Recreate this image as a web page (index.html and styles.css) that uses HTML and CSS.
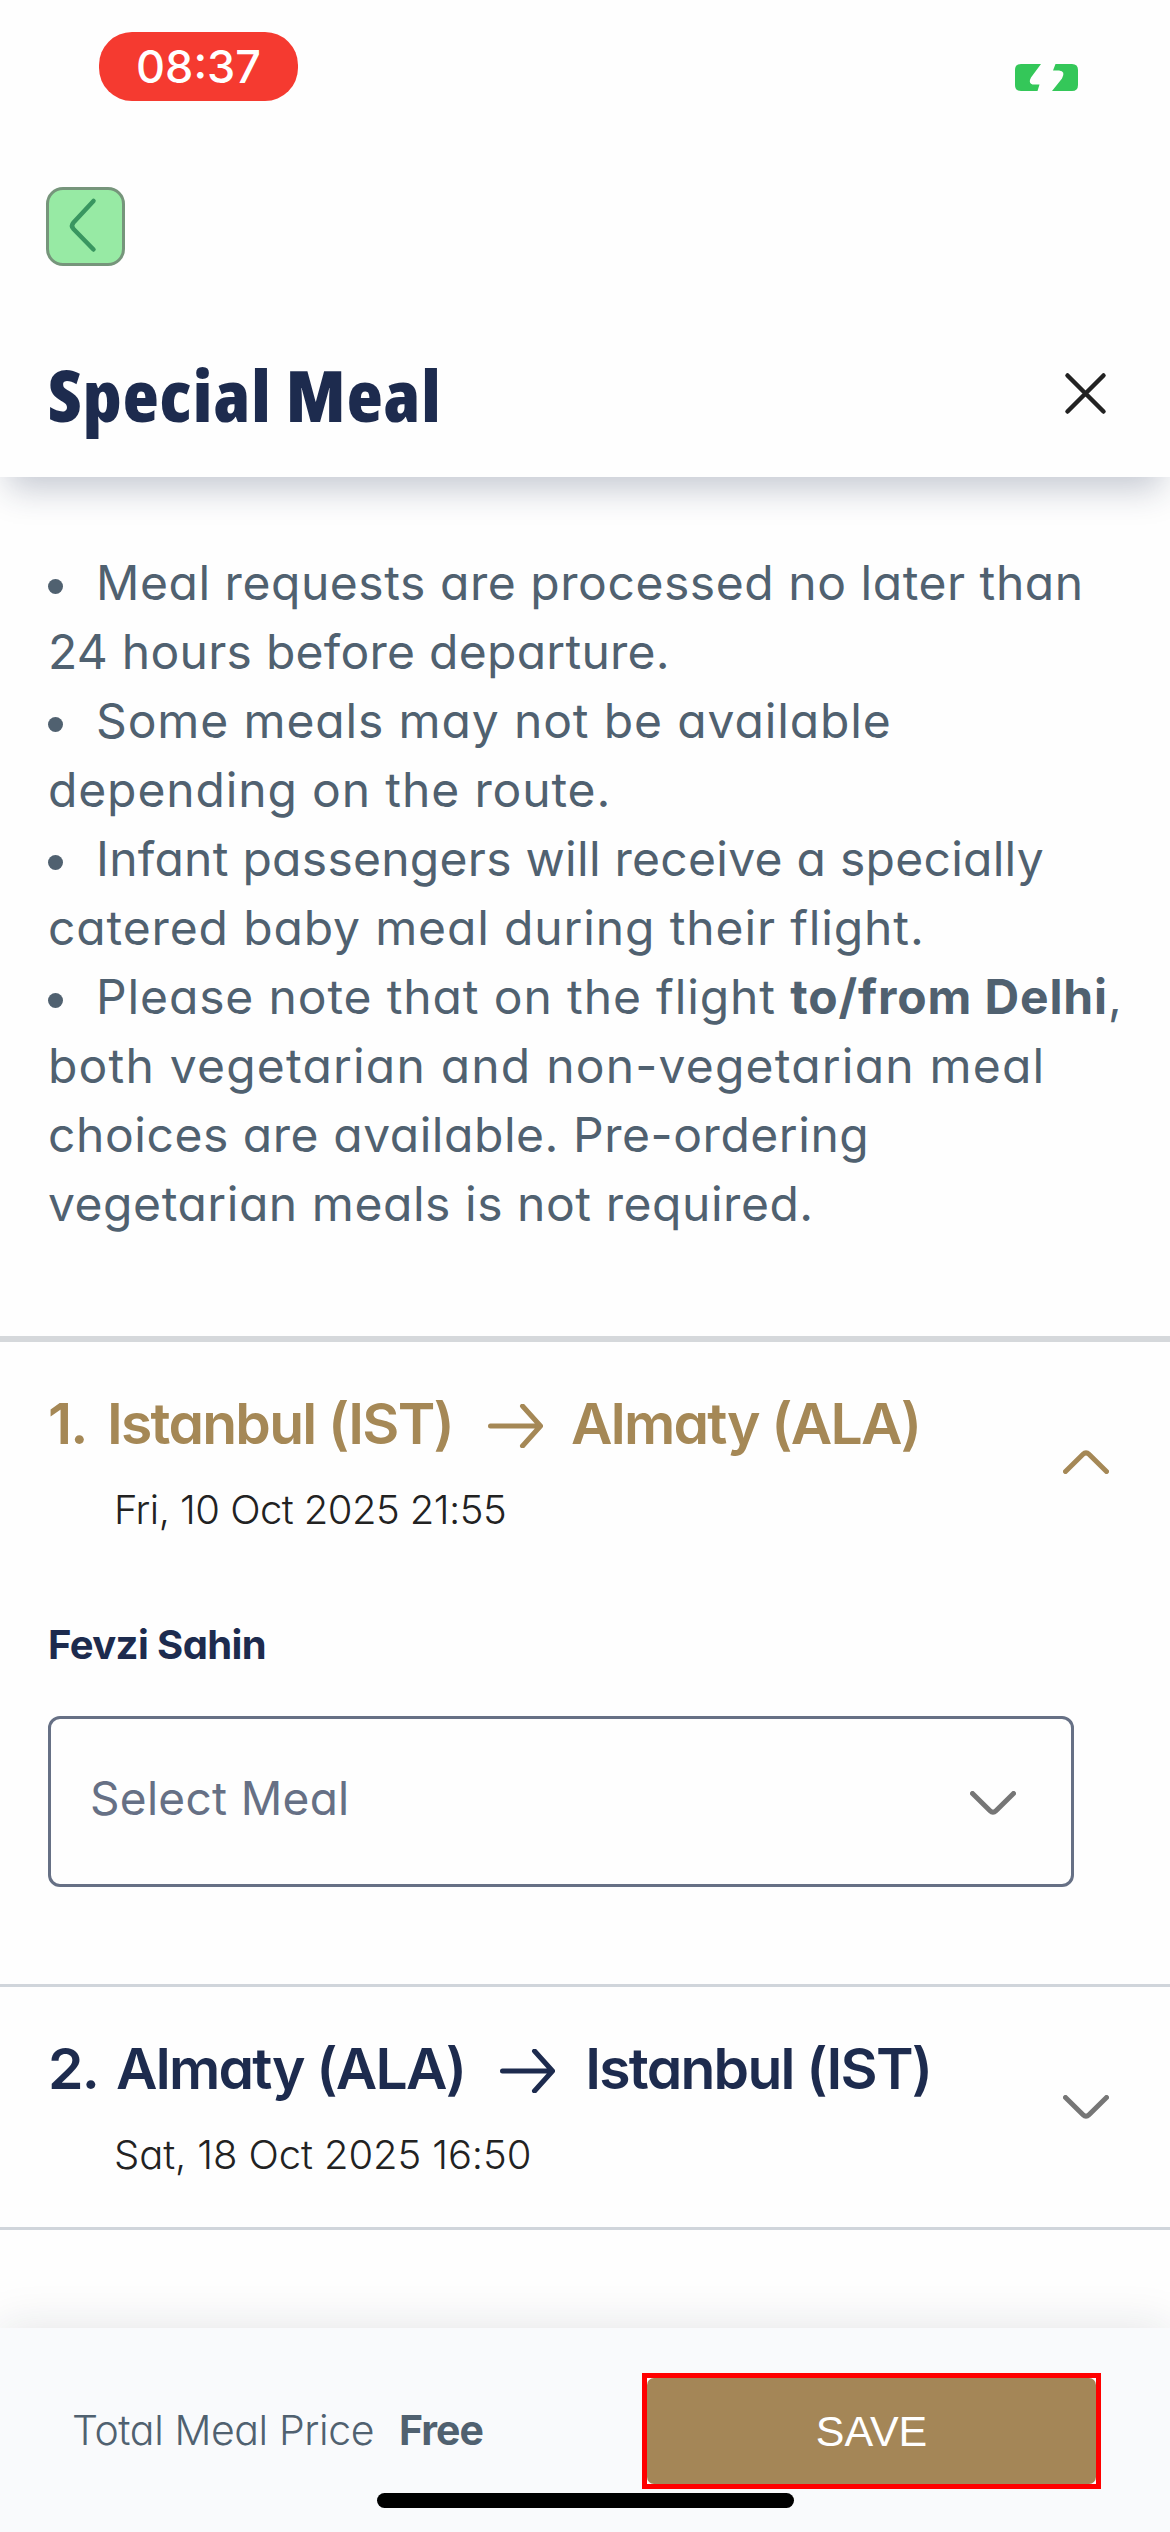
FILE: index.html
```html
<!DOCTYPE html>
<html lang="en">
<head>
<meta charset="utf-8">
<title>Special Meal</title>
<link rel="stylesheet" href="styles.css">
</head>
<body>
<div class="screen">
  <div class="status-bar">
    <span class="clock">08:37</span>
    <svg class="battery" width="63" height="27" viewBox="0 0 63 27">
      <path fill="#34c759" d="M6 0H26L16 13.500Q12.500 20.500 19.500 20.500H24.500L22.500 27H6Q0 27 0 21V6Q0 0 6 0Z"/>
      <path fill="#34c759" d="M40.500 0H57Q63 0 63 6V21Q63 27 57 27H37L47 14.500Q51 7 44 6.500H38Z"/>
    </svg>
  </div>

  <nav class="nav">
    <button class="back" aria-label="Back">
      <svg width="73" height="73" viewBox="0 0 73 73"><path d="M44.500 11L24.500 32.500Q21.500 35.800 24.500 39L44.500 59.500"/></svg>
    </button>
  </nav>

  <header class="header">
    <h1 class="title">Special Meal</h1>
    <svg class="close" width="44" height="44" viewBox="0 0 44 44"><path d="M3.500 3.500L39.500 39.500M39.500 3.500L3.500 39.500"/></svg>
  </header>

  <main class="content">
    <ul class="notes">
      <li>
        <div class="line first tight">Meal requests are processed no later than</div>
        <div class="line tighter">24 hours before departure.</div>
      </li>
      <li>
        <div class="line first">Some meals may not be available</div>
        <div class="line">depending on the route.</div>
      </li>
      <li>
        <div class="line first tighter">Infant passengers will receive a specially</div>
        <div class="line">catered baby meal during their flight.</div>
      </li>
      <li>
        <div class="line first">Please note that on the flight <b>to/from Delhi</b>,</div>
        <div class="line loose">both vegetarian and non-vegetarian meal</div>
        <div class="line tight">choices are available. Pre-ordering</div>
        <div class="line tight">vegetarian meals is not required.</div>
      </li>
    </ul>

    <section class="flight open">
      <div class="flight-head">
        <div class="flight-info">
          <h2 class="route">
            <span class="num">1.</span><span class="city">Istanbul (IST)</span>
            <svg class="arrow" width="55" height="44" viewBox="0 0 55 44"><path d="M2.500 22H52M34.500 2L52.500 22L34.500 42"/></svg>
            <span class="city">Almaty (ALA)</span>
          </h2>
          <p class="date">Fri, 10 Oct 2025 21:55</p>
        </div>
        <svg class="chevron" width="46" height="24" viewBox="0 0 46 24"><path d="M2.500 21.500L20 4.300Q23 1.300 26 4.300L43.500 21.500"/></svg>
      </div>
      <p class="passenger">Fevzi Sahin</p>
      <div class="select">
        <span class="select-text">Select Meal</span>
        <svg class="chevron" width="46" height="24" viewBox="0 0 46 24"><path d="M2.500 2.500L20 19.700Q23 22.700 26 19.700L43.500 2.500"/></svg>
      </div>
    </section>

    <section class="flight second">
      <div class="flight-head">
        <div class="flight-info">
          <h2 class="route">
            <span class="num">2.</span><span class="city">Almaty (ALA)</span>
            <svg class="arrow" width="55" height="44" viewBox="0 0 55 44"><path d="M2.500 22H52M34.500 2L52.500 22L34.500 42"/></svg>
            <span class="city">Istanbul (IST)</span>
          </h2>
          <p class="date">Sat, 18 Oct 2025 16:50</p>
        </div>
        <svg class="chevron" width="46" height="24" viewBox="0 0 46 24"><path d="M2.500 2.500L20 19.700Q23 22.700 26 19.700L43.500 2.500"/></svg>
      </div>
    </section>
  </main>

  <footer class="footer">
    <p class="total"><span class="total-label">Total Meal Price</span><b class="total-value">Free</b></p>
    <div class="save-frame"><button class="save">SAVE</button></div>
  </footer>
  <div class="home-indicator"></div>
</div>
</body>
</html>
```
FILE: styles.css
```css
* { box-sizing: border-box; margin: 0; padding: 0; }

body {
  width: 1170px;
  background: #fff;
  font-family: Inter, "Open Sans", sans-serif;
  font-feature-settings: "cv11";
  color: #506170;
}

button { border: 0; font: inherit; display: block; }
svg { display: block; flex: none; }
svg path { stroke-linecap: round; stroke-linejoin: round; }

.screen {
  position: relative;
  width: 1170px;
  height: 2532px;
  overflow: hidden;
  display: flex;
  flex-direction: column;
  background: #fefefe;
}

/* Status bar */
.status-bar {
  height: 187px;
  padding: 32px 92px 0 99px;
  display: flex;
  justify-content: space-between;
  align-items: flex-start;
}
.clock {
  width: 199px;
  height: 69px;
  border-radius: 33px;
  background: #f53a30;
  color: #fff;
  font-size: 45px;
  font-weight: 500;
  line-height: 69px;
  text-align: center;
}
.battery { margin-top: 32px; }

/* Back button */
.nav { height: 148px; padding-left: 46px; }
.back {
  width: 79px;
  height: 79px;
  border: 3px solid #76957b;
  border-radius: 17px;
  background: #97eaa4;
}
.back path { fill: none; stroke: #399660; stroke-width: 4.5; }

/* Sheet header */
.header {
  flex: none;
  height: 142px;
  padding: 20px 62px 0 48px;
  display: flex;
  justify-content: space-between;
  align-items: flex-start;
  box-shadow: 0 20px 32px -8px rgba(28, 43, 78, .25);
  clip-path: inset(0 0 -60px 0);
}
.title {
  font-family: "Open Sans", sans-serif;
  font-stretch: 75%;
  font-size: 70px;
  font-weight: 800;
  line-height: 80px;
  letter-spacing: 1px;
  transform: scaleX(1.06);
  transform-origin: left;
  color: #1d2b4e;
}
.close { margin-top: 17px; }
.close path { fill: none; stroke: #222; stroke-width: 4.5; }

/* Notes */
.notes {
  list-style: none;
  height: 859px;
  padding: 71px 0 0 48px;
  font-size: 48px;
  line-height: 69px;
}
.line { white-space: pre; height: 69px; letter-spacing: .87px; }
.line.loose { letter-spacing: 1.2px; }
.line.tight { letter-spacing: .55px; }
.line.tighter { letter-spacing: .27px; }
.line.first { display: flex; align-items: center; }
.line.first::before {
  content: "";
  width: 15px;
  height: 15px;
  margin: 8px 33px 0 0;
  border-radius: 50%;
  background: #506170;
}

/* Flights */
.flight {
  height: 246px;
  border-top: 3px solid #d0d5db;
  border-bottom: 3px solid #d0d5db;
  margin-top: -3px;
  padding: 0 61px 0 48px;
  color: #1d2b4e;
}
.flight.open { height: 651px; border-top: 6px solid #d5d8db; margin-top: 0; }
.flight-head { display: flex; justify-content: space-between; align-items: flex-start; }
.route {
  height: 80px;
  margin-top: 42px;
  display: flex;
  align-items: center;
  font-size: 57px;
  font-weight: 600;
  line-height: 80px;
  letter-spacing: -1.75px;
  white-space: nowrap;
}
.open .route { color: #a58856; }
.num { width: 59px; }
.second .num { width: 68px; }
.arrow { margin: 3px 28px 0 35px; }
.second .arrow { margin-right: 30px; }
.arrow path { fill: none; stroke: currentColor; stroke-width: 5; }
.date {
  margin-top: 18px;
  padding-left: 66px;
  font-size: 40px;
  font-weight: 300;
  line-height: 56px;
  letter-spacing: -.55px;
  color: #222;
}
.second .date { letter-spacing: -.1px; }
.chevron path { fill: none; stroke: #767676; stroke-width: 5; }
.flight-head .chevron { margin-top: 108px; }
.open .flight-head .chevron path { stroke: #a58856; }
.passenger { margin-top: 79px; font-size: 40px; font-weight: 700; line-height: 56px; letter-spacing: -.6px; }
.select {
  width: 1026px;
  height: 171px;
  margin-top: 43px;
  padding: 0 55px 0 39px;
  border: 3px solid #667085;
  border-radius: 12px;
  display: flex;
  align-items: center;
  justify-content: space-between;
}
.select-text { font-size: 46px; color: #667085; line-height: 56px; margin-top: -7px; letter-spacing: .3px; }
.select .chevron { margin-top: 3px; }

/* Footer */
.footer {
  height: 204px;
  margin-top: auto;
  padding: 45px 69px 0 72px;
  display: flex;
  justify-content: space-between;
  align-items: flex-start;
  background: #f9fafc;
  box-shadow: 0 0 44px rgba(28, 36, 50, .12);
}
.total { display: flex; margin-top: 29px; font-size: 41px; line-height: 56px; letter-spacing: -.4px; }
.total-label { font-weight: 300; }
.total-value { margin-left: 25px; letter-spacing: -1px; }
.save-frame { width: 459px; height: 116px; border: 5px solid #f00; background: #fff; }
.save {
  width: 449px;
  height: 106px;
  border-radius: 7px;
  background: #a48657;
  color: #fff;
  font-family: "Liberation Sans", Arial, sans-serif;
  font-size: 43px;
  line-height: 106px;
  text-align: center;
}
.home-indicator {
  position: absolute;
  left: 377px;
  bottom: 24px;
  width: 417px;
  height: 15px;
  border-radius: 8px;
  background: #000;
}
```
